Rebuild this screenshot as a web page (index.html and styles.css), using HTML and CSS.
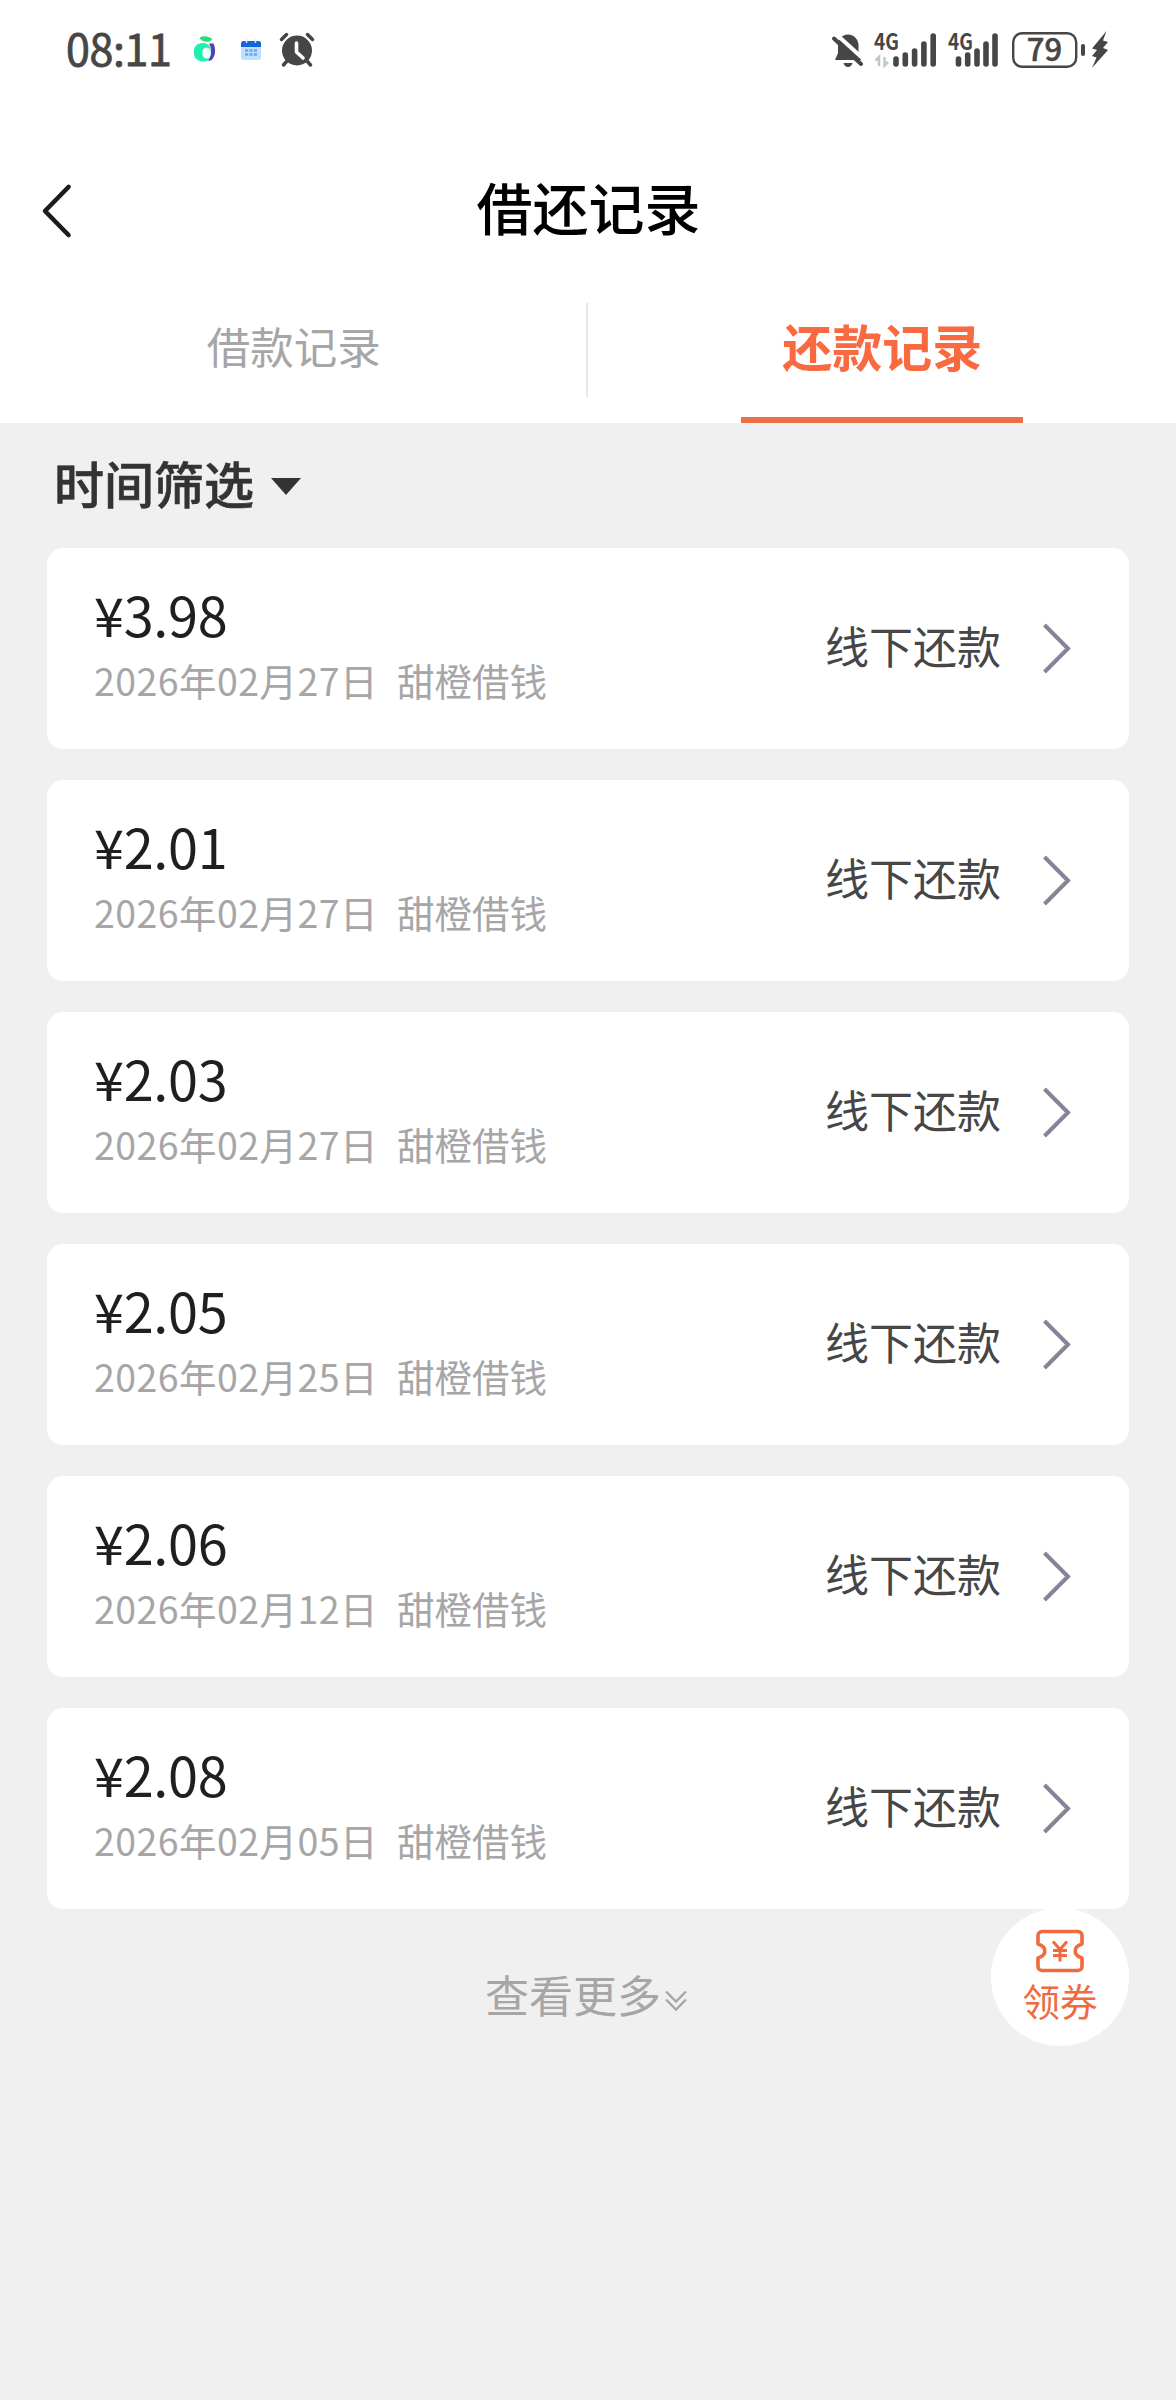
FILE: index.html
```html
<!DOCTYPE html>
<html lang="zh-CN">
<head>
<meta charset="utf-8">
<title>借还记录</title>
<link rel="stylesheet" href="styles.css">
</head>
<body>
<header class="top">
  <div class="status">
    <div class="status-left">
      <span class="clock">08:11</span>
      <svg class="ic-fruit" width="24" height="30" viewBox="0 0 24 30"><path d="M6.500 3C9 .5 14 1 19 3.500c0 2-2 3.500-5 3.200C10 6.500 8 5.500 6.500 3z" fill="#2bdc76"/><path d="M16 8.500h4.500c2.500 5 2 12-1 15.500-1.500 1.700-3 2-4.500 1.800 3-3.500 4.500-11 1-17.300z" fill="#5440b4"/><path d="M10 8C3.500 8 .8 12 .8 17c0 6 4 9.500 8.700 9.500 2.500 0 4.500-.5 6-1.500 2.500-3.500 2.800-8 1.500-12.500C16 9.500 14 8 10 8z" fill="#1ff0b0"/><ellipse cx="13.500" cy="18" rx="4.300" ry="5.600" fill="#f4fffb"/></svg>
      <svg class="ic-cal" width="22" height="22" viewBox="0 0 22 22"><rect x="1" y="2" width="20" height="19" rx="2.500" fill="#bfe0ff"/><path d="M3.500 2h15A2.500 2.500 0 0 1 21 4.500V8H1V4.500A2.500 2.500 0 0 1 3.500 2z" fill="#1565d8"/><path d="M6.500 0v4M15.500 0v4" stroke="#d5ebff" stroke-width="1.500"/><path d="M5 11.500h12M5 15.500h12" stroke="#6fa8ea" stroke-width="2.600" stroke-dasharray="3.200 1.200"/></svg>
      <svg class="ic-alarm" width="36" height="36" viewBox="0 0 36 36"><circle cx="18" cy="18.500" r="15" fill="#464646"/><path d="M2.500 7.500l5-5M33.500 7.500l-5-5M8 29l-3.500 4M28 29l3.500 4" stroke="#464646" stroke-width="3.500" stroke-linecap="round"/><path d="M17.500 11v9l6.500 6" fill="none" stroke="#fff" stroke-width="3.600" stroke-linecap="round" stroke-linejoin="round"/></svg>
    </div>
    <div class="status-right">
      <svg class="ic-mute" width="32" height="36" viewBox="0 0 32 36"><path d="M16 1.500c6.500.5 10.500 5 10.500 11v7.500l3.500 7H3l3-7v-7.500C6 6.500 9.500 2 16 1.500zM11.500 30h9c-.8 2.500-2.300 4-4.500 4s-3.700-1.500-4.500-4z" fill="#464646"/><path d="M4 1l28 25.500" stroke="#fff" stroke-width="4"/><path d="M2 5.500l27 25.500" stroke="#464646" stroke-width="4" stroke-linecap="round"/></svg>
      <svg class="ic-sig1" width="64" height="60" viewBox="0 -12 64 60"><text x="0" y="17.500" class="net" textLength="25" lengthAdjust="spacingAndGlyphs">4G</text><path d="M5 34V25l-3.500 3.500M10.500 25v8.500l3.500-3.500" fill="none" stroke="#c6c6c6" stroke-width="2.500"/><path d="M22 27v5M31.300 23v9M40.600 19v13M49.900 12v20M59.200 4v28" stroke="#464646" stroke-width="5.600" stroke-linecap="round"/></svg>
      <svg class="ic-sig2" width="52" height="60" viewBox="0 -12 52 60"><text x="0" y="17.500" class="net" textLength="25" lengthAdjust="spacingAndGlyphs">4G</text><path d="M10.500 27v5M19.700 23v9M29 19v13M38 12v20M47 4v28" stroke="#464646" stroke-width="5.600" stroke-linecap="round"/></svg>
      <svg class="ic-bat" width="74" height="60" viewBox="0 -12 74 60"><rect x="1.200" y="1.200" width="63" height="33.600" rx="9" fill="none" stroke="#464646" stroke-width="2.400"/><path d="M71 14v8" stroke="#464646" stroke-width="4" stroke-linecap="round"/><text x="32.500" y="29" text-anchor="middle" class="pct">79</text></svg>
      <svg class="ic-bolt" width="18" height="38" viewBox="0 0 18 38"><path d="M15.500 0L1 17.500l5 1.500-5 6 4.500 1.500L1 37l16-18-5-2 5-6-5-1.500z" fill="#464646"/></svg>
    </div>
  </div>
  <div class="nav">
    <svg class="back" width="36" height="60" viewBox="0 0 36 60"><path d="M32.500 6L9 30l23.500 24" fill="none" stroke="#1c1c1c" stroke-width="4.600" stroke-linecap="round" stroke-linejoin="round"/></svg>
    <h1 class="title">借还记录</h1>
  </div>
  <nav class="tabs">
    <a class="tab">借款记录</a>
    <span class="divider"></span>
    <a class="tab active">还款记录</a>
  </nav>
</header>
<main class="main">
  <div class="filter"><span>时间筛选</span><svg width="30" height="17" viewBox="0 0 30 17"><path d="M0 0h30L15 17z" fill="#333"/></svg></div>
  <ul class="list">
    <li class="card"><div class="info"><b class="amount">¥3.98</b><span class="meta"><span class="date">2026年02月27日</span><span>甜橙借钱</span></span></div><span class="type">线下还款</span><svg class="go" width="30" height="54" viewBox="0 0 30 54"><path d="M2.500 3L26 26.500 2.500 50" fill="none" stroke="#858496" stroke-width="4"/></svg></li>
    <li class="card"><div class="info"><b class="amount">¥2.01</b><span class="meta"><span class="date">2026年02月27日</span><span>甜橙借钱</span></span></div><span class="type">线下还款</span><svg class="go" width="30" height="54" viewBox="0 0 30 54"><path d="M2.500 3L26 26.500 2.500 50" fill="none" stroke="#858496" stroke-width="4"/></svg></li>
    <li class="card"><div class="info"><b class="amount">¥2.03</b><span class="meta"><span class="date">2026年02月27日</span><span>甜橙借钱</span></span></div><span class="type">线下还款</span><svg class="go" width="30" height="54" viewBox="0 0 30 54"><path d="M2.500 3L26 26.500 2.500 50" fill="none" stroke="#858496" stroke-width="4"/></svg></li>
    <li class="card"><div class="info"><b class="amount">¥2.05</b><span class="meta"><span class="date">2026年02月25日</span><span>甜橙借钱</span></span></div><span class="type">线下还款</span><svg class="go" width="30" height="54" viewBox="0 0 30 54"><path d="M2.500 3L26 26.500 2.500 50" fill="none" stroke="#858496" stroke-width="4"/></svg></li>
    <li class="card"><div class="info"><b class="amount">¥2.06</b><span class="meta"><span class="date">2026年02月12日</span><span>甜橙借钱</span></span></div><span class="type">线下还款</span><svg class="go" width="30" height="54" viewBox="0 0 30 54"><path d="M2.500 3L26 26.500 2.500 50" fill="none" stroke="#858496" stroke-width="4"/></svg></li>
    <li class="card"><div class="info"><b class="amount">¥2.08</b><span class="meta"><span class="date">2026年02月05日</span><span>甜橙借钱</span></span></div><span class="type">线下还款</span><svg class="go" width="30" height="54" viewBox="0 0 30 54"><path d="M2.500 3L26 26.500 2.500 50" fill="none" stroke="#858496" stroke-width="4"/></svg></li>
  </ul>
  <div class="more"><span>查看更多</span><svg width="22" height="22" viewBox="0 0 22 22"><path d="M1 1.500l10 10L21 1.500M1 9.500l10 10 10-10" fill="none" stroke="#a6a6a6" stroke-width="2.300"/></svg></div>
</main>
<a class="coupon">
  <svg width="50" height="44" viewBox="0 0 50 44"><path d="M7 2.500h36a4 4 0 0 1 4 4V15c-9 2.500-9 11.500 0 14v8.500a4 4 0 0 1-4 4H7a4 4 0 0 1-4-4V29c9-2.500 9-11.500 0-14V6.500a4 4 0 0 1 4-4z" fill="none" stroke="#f0693f" stroke-width="3.600" stroke-linejoin="round"/><path d="M18 12.500l7 8 7-8M18 21.500h14M18 26.500h14M25 20.500v12" fill="none" stroke="#f0693f" stroke-width="3"/></svg>
  <span>领券</span>
</a>
</body>
</html>
```

FILE: styles.css
```css
* { box-sizing: border-box; }
body {
  margin: 0;
  width: 1176px;
  height: 2400px;
  position: relative;
  background: #f0f0f0;
  font-family: "Noto Sans CJK SC", sans-serif;
  overflow: hidden;
}
svg { display: block; flex: none; }
.top { height: 423px; background: #fff; }
.status { height: 100px; display: flex; justify-content: space-between; padding: 0 66px; }
.status-left, .status-right { display: flex; align-items: center; }
.clock { font-size: 43px; font-weight: 400; line-height: 94px; padding-bottom: 6px; color: #464646; -webkit-text-stroke: .8px #464646; letter-spacing: -.4px; width: 127px; }
.ic-cal { margin-left: 23px; }
.ic-alarm { margin-left: 17px; }
.ic-mute { margin-top: 2px; }
.ic-sig1 { margin-left: 10px; }
.ic-sig2 { margin-left: 10px; }
.ic-bat { margin-left: 12px; }
.ic-bolt { margin-left: 5px; margin-right: 1px; }
.net { font: 700 22.500px "Noto Sans CJK SC", sans-serif; fill: #464646; }
.pct { font: 500 31px "Noto Sans CJK SC", sans-serif; fill: #464646; stroke: #464646; stroke-width: .5px; }
.nav { height: 180px; padding: 42px 36px 0; display: flex; }
.back { margin-top: 39px; }
.title { flex: 1; margin: 24px 35px 0 0; text-align: center; font-size: 56px; font-weight: 500; line-height: 80px; color: #000; }
.tabs { height: 143px; display: flex; }
.tab { flex: 1; display: flex; justify-content: center; font-size: 43.500px; line-height: 132px; color: #a6a6a6; }
.divider { width: 2px; height: 94px; margin: 23px 1px 0 -2px; background: #e8e8e8; }
.active { color: #fa6a41; font-size: 50px; font-weight: 700; line-height: 130px; }
.active::after { content: ""; align-self: flex-end; width: 282px; height: 6px; margin-left: -241px; margin-right: -41px; background: #ed6d46; }
.filter { height: 125px; padding-left: 54px; display: flex; align-items: center; gap: 17px; font-size: 50px; font-weight: 500; line-height: 119px; color: #333; -webkit-text-stroke: .6px #333; }
.filter span { padding-bottom: 6px; }
.filter svg { margin-top: 2px; }
.list { margin: 0; padding: 0 47px; list-style: none; display: grid; gap: 31.100px; }
.card { height: 201px; padding: 0 57px 0 47px; border-radius: 16px; background: #fff; display: flex; align-items: center; }
.info { flex: 1; display: flex; flex-direction: column; padding-bottom: 6px; }
.amount { font-size: 54px; font-weight: 400; line-height: 68px; letter-spacing: -.3px; color: #1f1f1f; }
.meta { display: flex; gap: 19px; font-size: 37.500px; line-height: 64px; color: #a6a6a6; }
.date { letter-spacing: .45px; }
.type { font-size: 44px; color: #464646; margin-right: 41px; padding-bottom: 7px; }
.more { height: 176px; padding-right: 4px; display: flex; justify-content: center; align-items: center; gap: 4px; font-size: 44px; color: #a6a6a6; }
.more span { padding-bottom: 6px; }
.more svg { margin-top: 8px; }
.coupon { position: absolute; left: 991px; top: 1908px; width: 138px; height: 138px; border-radius: 50%; background: #fff; display: flex; flex-direction: column; align-items: center; padding-top: 21px; font-size: 37.500px; line-height: 54px; color: #f0693f; }
```
